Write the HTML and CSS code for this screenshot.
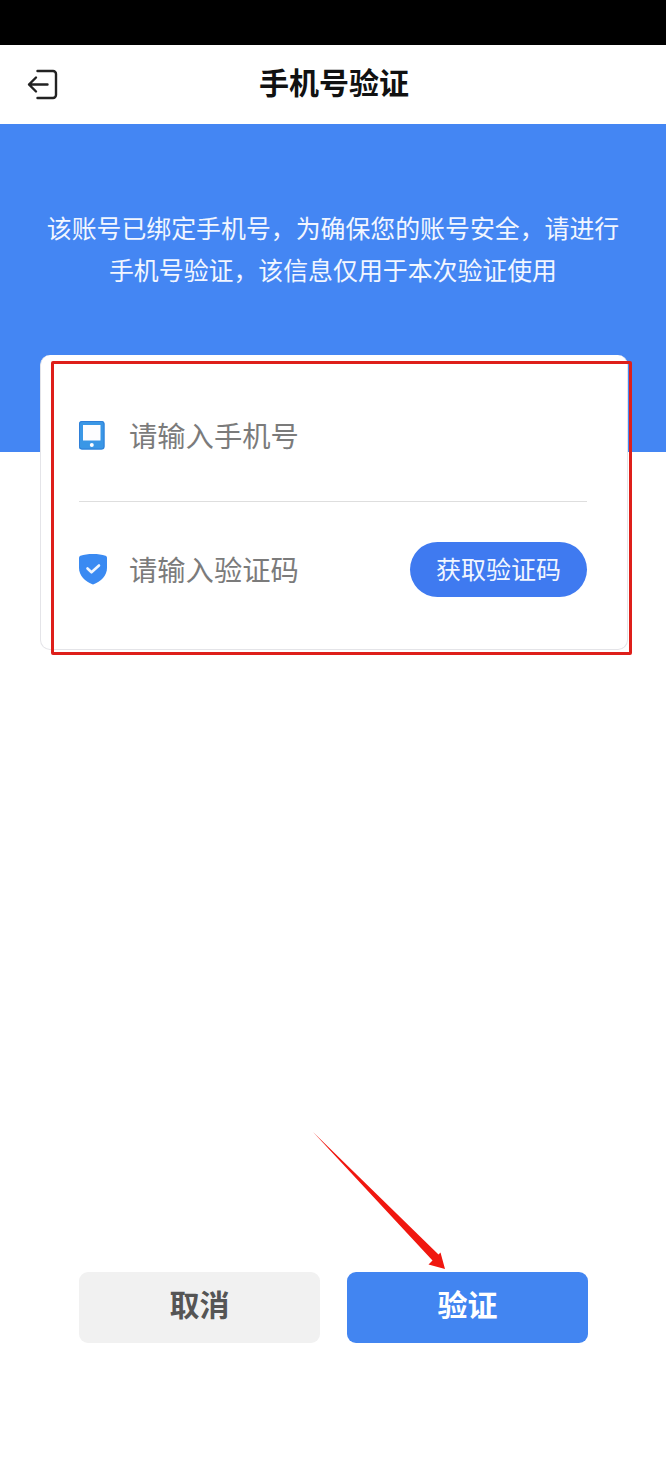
FILE: index.html
```html
<!DOCTYPE html>
<html lang="zh-CN">
<head>
    <meta charset="UTF-8">
    <meta name="viewport" content="width=device-width, initial-scale=1.0">
    <title>手机号验证</title>
    <link rel="stylesheet" href="styles.css">
</head>
<body>
    <div class="status-bar"></div>

    <header class="top-bar">
        <button class="back-btn" aria-label="返回">
            <svg width="32" height="32" viewBox="0 0 32 32" fill="none" stroke="#222" stroke-width="2.400" stroke-linecap="round" stroke-linejoin="round">
                <path d="M10.500 2h15.500a3 3 0 0 1 3 3v21a3 3 0 0 1-3 3H10.500"/>
                <path d="M20.500 15.500H2M9 8.500L2 15.500l7 7"/>
            </svg>
        </button>
        <h1>手机号验证</h1>
    </header>

    <section class="hero">
        <p>该账号已绑定手机号，为确保您的账号安全，请进行<br>手机号验证，该信息仅用于本次验证使用</p>
    </section>

    <main class="card">
        <div class="field field-phone">
            <svg class="field-icon" width="26" height="29" viewBox="0 0 26 29">
                <rect x="0" y="0" width="25.500" height="28.500" rx="2.500" fill="#3a97e6"/>
                <rect x="0.500" y="0.500" width="24.500" height="27.500" rx="2.500" fill="none" stroke="#2f7fd8"/>
                <rect x="4" y="4" width="17.500" height="15.500" fill="#fdfdff"/>
                <circle cx="12.800" cy="24" r="2" fill="#fff"/>
            </svg>
            <span class="placeholder">请输入手机号</span>
        </div>
        <div class="field field-code">
            <svg class="field-icon" width="28" height="31" viewBox="0 0 28 31">
                <path d="M14 0c5 0 9 .6 12.500 1.800C27.500 2.200 28 3 28 4v10c0 7.500-6 13.500-14 16.500C6 27.500 0 21.500 0 14V4c0-1 .5-1.800 1.500-2.200C5 .6 9 0 14 0z" fill="#3a8af2"/>
                <path d="M8.500 14.500l4 3.800 7.500-6.800" fill="none" stroke="#eef5ff" stroke-width="2.600" stroke-linecap="round" stroke-linejoin="round"/>
            </svg>
            <span class="placeholder">请输入验证码</span>
            <button class="code-btn">获取验证码</button>
        </div>
    </main>

    <div class="actions">
        <button class="action-btn cancel">取消</button>
        <button class="action-btn confirm">验证</button>
    </div>

    <!-- red marks drawn on top of the screenshot -->
    <div class="mark-box"></div>
    <svg class="mark-arrow" width="140" height="145" viewBox="0 0 140 145">
        <path d="M0 0L125.500 122.500L127.500 120.500L132 137L115.500 132.500L119.500 128.500Z" fill="#f0170f"/>
    </svg>
</body>
</html>
```

FILE: styles.css
```css
* {
    margin: 0;
    padding: 0;
    box-sizing: border-box;
}

body {
    position: relative;
    width: 666px;
    height: 1480px;
    overflow: hidden;
    background-color: #ffffff;
    font-family: "Noto Sans CJK SC", "Noto Sans", sans-serif;
    display: flex;
    flex-direction: column;
}

button {
    border: none;
    font-family: inherit;
    cursor: pointer;
}

.status-bar {
    height: 45px;
    background-color: #000000;
}

.top-bar {
    position: relative;
    height: 79px;
    display: flex;
    align-items: center;
    justify-content: center;
}

.top-bar h1 {
    font-size: 30px;
    font-weight: 700;
    color: #111111;
    margin-top: -7px;
    margin-left: 2px;
}

.back-btn {
    position: absolute;
    left: 27px;
    top: 24px;
    display: flex;
    background: none;
}

.hero {
    height: 328px;
    padding-top: 82px;
    background-color: #4486f3;
    text-align: center;
}

.hero p {
    font-size: 24.900px;
    line-height: 42px;
    color: #f2f6ff;
}

.card {
    width: 588px;
    height: 295px;
    margin: -97px 0 0 40px;
    padding: 0 40px 0 38px;
    background-color: #ffffff;
    border: 1px solid #e4e4e8;
    border-top: none;
    border-radius: 10px;
    display: flex;
    flex-direction: column;
}

.field {
    display: flex;
    align-items: center;
}

.field-phone {
    height: 147px;
    padding-top: 14px;
    border-bottom: 1px solid #dedede;
}

.field-code {
    height: 134px;
}

.field-icon {
    flex-shrink: 0;
}

.field-phone .placeholder {
    margin-left: 24px;
}

.field-code .placeholder {
    margin-left: 22px;
    flex: 1;
}

.placeholder {
    font-size: 28.300px;
    color: #7b7b7b;
    margin-top: -2px;
}

.code-btn {
    width: 177px;
    height: 55px;
    padding-bottom: 4px;
    border-radius: 28px;
    background-color: #3f7af0;
    color: #f2f6ff;
    font-size: 25px;
    margin-top: 1px;
}

.actions {
    display: flex;
    gap: 27px;
    margin: 622px 0 0 79px;
}

.action-btn {
    width: 241px;
    height: 71px;
    padding-bottom: 9px;
    border-radius: 9px;
    font-size: 30px;
    font-weight: 700;
}

.cancel {
    background-color: #f1f1f1;
    color: #555555;
}

.confirm {
    background-color: #4285f1;
    color: #ffffff;
}

.mark-box {
    position: absolute;
    left: 51px;
    top: 361px;
    width: 581px;
    height: 294px;
    border: 3px solid #de1f1a;
    border-radius: 2px;
}

.mark-arrow {
    position: absolute;
    left: 313px;
    top: 1132px;
}
```
